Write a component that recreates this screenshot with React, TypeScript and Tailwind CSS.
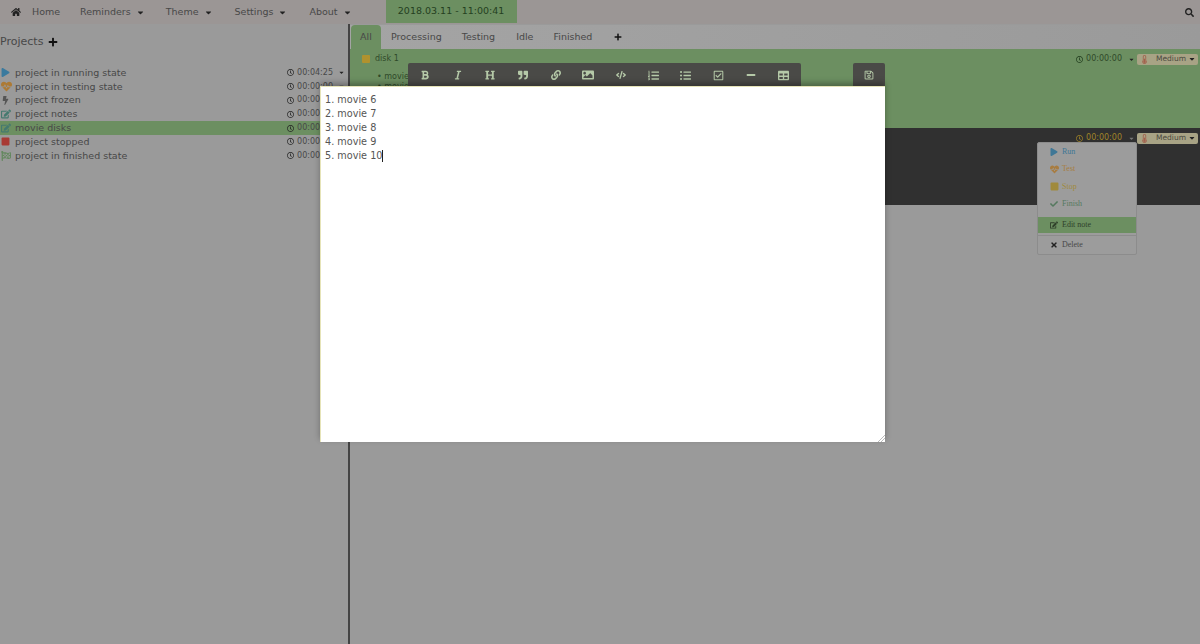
import type { ReactNode } from 'react'
import {
  FaBold,
  FaBolt,
  FaCaretDown,
  FaCheck,
  FaRegCheckSquare,
  FaCode,
  FaEdit,
  FaFlagCheckered,
  FaHeartbeat,
  FaHome,
  FaImage,
  FaItalic,
  FaLink,
  FaListOl,
  FaListUl,
  FaMinus,
  FaPlay,
  FaPlus,
  FaQuoteRight,
  FaRegClock,
  FaRegSave,
  FaSearch,
  FaStop,
  FaTable,
  FaThermometerHalf,
  FaTimes,
  FaHeading,
} from 'react-icons/fa'

const projects: { name: string; time: string; icon: ReactNode; active?: boolean }[] = [
  { name: 'project in running state', time: '00:04:25', icon: <FaPlay className="text-[9px] text-[#3a7a9e]" /> },
  { name: 'project in testing state', time: '00:00:00', icon: <FaHeartbeat className="text-[11px] text-[#ad7a34]" /> },
  { name: 'project frozen', time: '00:00:00', icon: <FaBolt className="text-[9px] text-[#555]" /> },
  { name: 'project notes', time: '00:00:00', icon: <FaEdit className="text-[10px] text-[#44796f]" /> },
  { name: 'movie disks', time: '00:00:00', icon: <FaEdit className="text-[10px] text-[#44796f]" />, active: true },
  { name: 'project stopped', time: '00:00:00', icon: <FaStop className="text-[9px] text-[#a83a34]" /> },
  { name: 'project in finished state', time: '00:00:00', icon: <FaFlagCheckered className="text-[10px] text-[#64885f]" /> },
]

const toolbar = [
  <FaBold />,
  <FaItalic />,
  <FaHeading />,
  <FaQuoteRight />,
  <FaLink />,
  <FaImage className="text-[12px]" />,
  <FaCode />,
  <FaListOl className="text-[11px]" />,
  <FaListUl className="text-[11px]" />,
  <FaRegCheckSquare className="text-[11px]" />,
  <FaMinus />,
  <FaTable className="text-[11px]" />,
]

function NavItem({ label, className }: { label: string; className: string }) {
  return (
    <span className={`flex items-center gap-[5px] ${className}`}>
      {label}
      <FaCaretDown className="text-[9px] text-[#222]" />
    </span>
  )
}

function Priority() {
  return (
    <span className="flex h-[11px] w-[61px] items-center rounded-[2px] bg-[#a8a385] pl-[3px] pr-[2px] text-[#4a4a40]">
      <FaThermometerHalf className="text-[9px] text-[#a3604c]" />
      <span className="ml-[7px] flex-1 text-[7.5px]">Medium</span>
      <FaCaretDown className="text-[8px] text-[#222]" />
    </span>
  )
}

function MenuItem({ icon, label, color, height = 'h-[17.5px]' }: { icon: ReactNode; label: string; color: string; height?: string }) {
  return (
    <div className={`flex items-center pl-[12px] font-['Liberation_Serif',serif] text-[8px] ${height} ${color}`}>
      <span className="flex w-[12px] items-center text-[8px]">{icon}</span>
      {label}
    </div>
  )
}

export default function App() {
  return (
    <div className="relative flex h-[644px] w-[1200px] flex-col overflow-hidden bg-[#9a9a9a] font-['DejaVu_Sans',sans-serif] text-[9.5px] text-[#484848]">
      <nav className="flex h-[24px] shrink-0 items-center bg-[#9b9695] pr-[6px]">
        <FaHome className="ml-[11px] text-[10px] text-[#222]" />
        <span className="ml-[11px]">Home</span>
        <NavItem label="Reminders" className="ml-[20px]" />
        <NavItem label="Theme" className="ml-[21px]" />
        <NavItem label="Settings" className="ml-[22px]" />
        <NavItem label="About" className="ml-[22px]" />
        <span className="ml-[34px] flex h-[23px] w-[131px] items-center justify-center self-start bg-[#6c8f61] text-[#24401f]">
          2018.03.11 - 11:00:41
        </span>
        <FaSearch className="ml-auto text-[9px] text-[#222]" />
      </nav>

      <div className="flex min-h-0 flex-1">
        <aside className="w-[348px] shrink-0">
          <div className="flex h-[36px] items-center gap-[5px] text-[11px] text-[#484848]">
            Projects
            <FaPlus className="text-[10px] text-[#111]" />
          </div>
          <ul className="mt-[6px]">
            {projects.map((p) => (
              <li
                key={p.name}
                className={`flex h-[13.8px] items-center pr-[3px] ${p.active ? 'bg-[#6c8f61]' : ''}`}
              >
                <span className="flex w-[15px] items-center pl-[1px]">{p.icon}</span>
                <span>{p.name}</span>
                <span className="ml-auto flex items-center gap-[3px] text-[8px]">
                  <FaRegClock className="text-[7px] text-[#222]" />
                  {p.time}
                </span>
                <FaCaretDown className="ml-[5px] text-[7px] text-[#222]" />
              </li>
            ))}
          </ul>
        </aside>

        <main className="flex min-w-0 flex-1 flex-col border-l-2 border-[#444] pt-[1px]">
          <div className="flex h-[24px] shrink-0 items-stretch bg-linear-to-r from-[#a4a4a4] to-[#9a9a9a] pl-[1px]">
            <span className="flex w-[30px] items-center justify-center rounded-t-[4px] bg-[#6c8f61]">All</span>
            <span className="ml-[10px] flex items-center">Processing</span>
            <span className="ml-[20px] flex items-center">Testing</span>
            <span className="ml-[21px] flex items-center">Idle</span>
            <span className="ml-[20px] flex items-center">Finished</span>
            <span className="ml-[22px] flex items-center">
              <FaPlus className="text-[8px] text-[#111]" />
            </span>
          </div>

          <section className="h-[79px] shrink-0 overflow-hidden bg-[#6c8f61] pl-[4px] pr-[2px] text-[#2f4a2a]">
            <div className="flex h-[20px] items-center text-[8px]">
              <span className="ml-[8px] h-[8px] w-[8px] rounded-[1px] bg-[#b0922e]" />
              <span className="ml-[5px]">disk 1</span>
              <span className="ml-auto flex items-center gap-[3px]">
                <FaRegClock className="text-[7px] text-[#1f3a1c]" />
                00:00:00
                <FaCaretDown className="ml-[3px] text-[7px] text-[#222]" />
              </span>
              <span className="ml-[2px]">
                <Priority />
              </span>
            </div>
            <div className="ml-[23px] mt-[3px] text-[8px] leading-[10px]">• movie</div>
            <div className="ml-[23px] text-[8px] leading-[10px]">• movie</div>
          </section>

          <section className="h-[77px] shrink-0 bg-[#303030] pl-[4px] pr-[2px]">
            <div className="flex h-[20px] items-center justify-end text-[8px] text-[#a08428]">
              <span className="flex items-center gap-[3px]">
                <FaRegClock className="text-[7px]" />
                00:00:00
                <FaCaretDown className="ml-[3px] text-[7px] text-[#777]" />
              </span>
              <span className="ml-[2px]">
                <Priority />
              </span>
            </div>
          </section>
        </main>
      </div>

      <div className="absolute left-[1037px] top-[142px] w-[100px] rounded-[2px] border border-[#8c8c8c] bg-[#9c9c9c]">
        <MenuItem icon={<FaPlay className="text-[8px]" />} label="Run" color="text-[#3f7796]" />
        <MenuItem icon={<FaHeartbeat className="text-[9px]" />} label="Test" color="text-[#a87c40]" />
        <MenuItem icon={<FaStop className="text-[9px]" />} label="Stop" color="text-[#a08a3c]" />
        <MenuItem icon={<FaCheck />} label="Finish" color="text-[#55795f]" />
        <div className="mt-[4px] bg-[#6c8f61]">
          <MenuItem icon={<FaEdit />} label="Edit note" color="text-[#2f3f2a]" height="h-[16px]" />
        </div>
        <div className="mt-[2px] border-t border-[#8c8c8c]">
          <MenuItem icon={<FaTimes className="text-[#222]" />} label="Delete" color="text-[#484848]" />
        </div>
      </div>

      <div className="absolute left-[408px] top-[63px] flex h-[24px] w-[393px] items-center justify-around rounded-t-[2px] bg-[#4a4a47] px-[1px] text-[10px] text-[#b5c9a8]">
        {toolbar.map((icon, i) => (
          <span key={i} className="flex w-[32px] justify-center">
            {icon}
          </span>
        ))}
      </div>
      <div className="absolute left-[853px] top-[63px] flex h-[24px] w-[32px] items-center justify-center rounded-t-[2px] bg-[#4a4a47] text-[10px] text-[#b5c9a8]">
        <FaRegSave />
      </div>

      <div className="absolute left-[320px] top-[86px] h-[356px] w-[565px] border-l border-t border-[#e6e4b8] bg-white pl-[4px] pt-[6px] text-[9.7px] leading-[13.9px] text-[#555] shadow-[0_-3px_6px_rgba(0,0,0,0.3)]">
        <div>1. movie 6</div>
        <div>2. movie 7</div>
        <div>3. movie 8</div>
        <div>4. movie 9</div>
        <div className="flex items-center">
          5. movie 10
          <span className="h-[12px] w-px bg-[#222]" />
        </div>
        {/* textarea resize grip */}
        <svg className="absolute bottom-0 right-0 h-[7px] w-[7px] text-[#bbb]" viewBox="0 0 7 7" fill="none" stroke="currentColor">
          <path d="M0 7L7 0M3 7L7 3" />
        </svg>
      </div>
    </div>
  )
}
